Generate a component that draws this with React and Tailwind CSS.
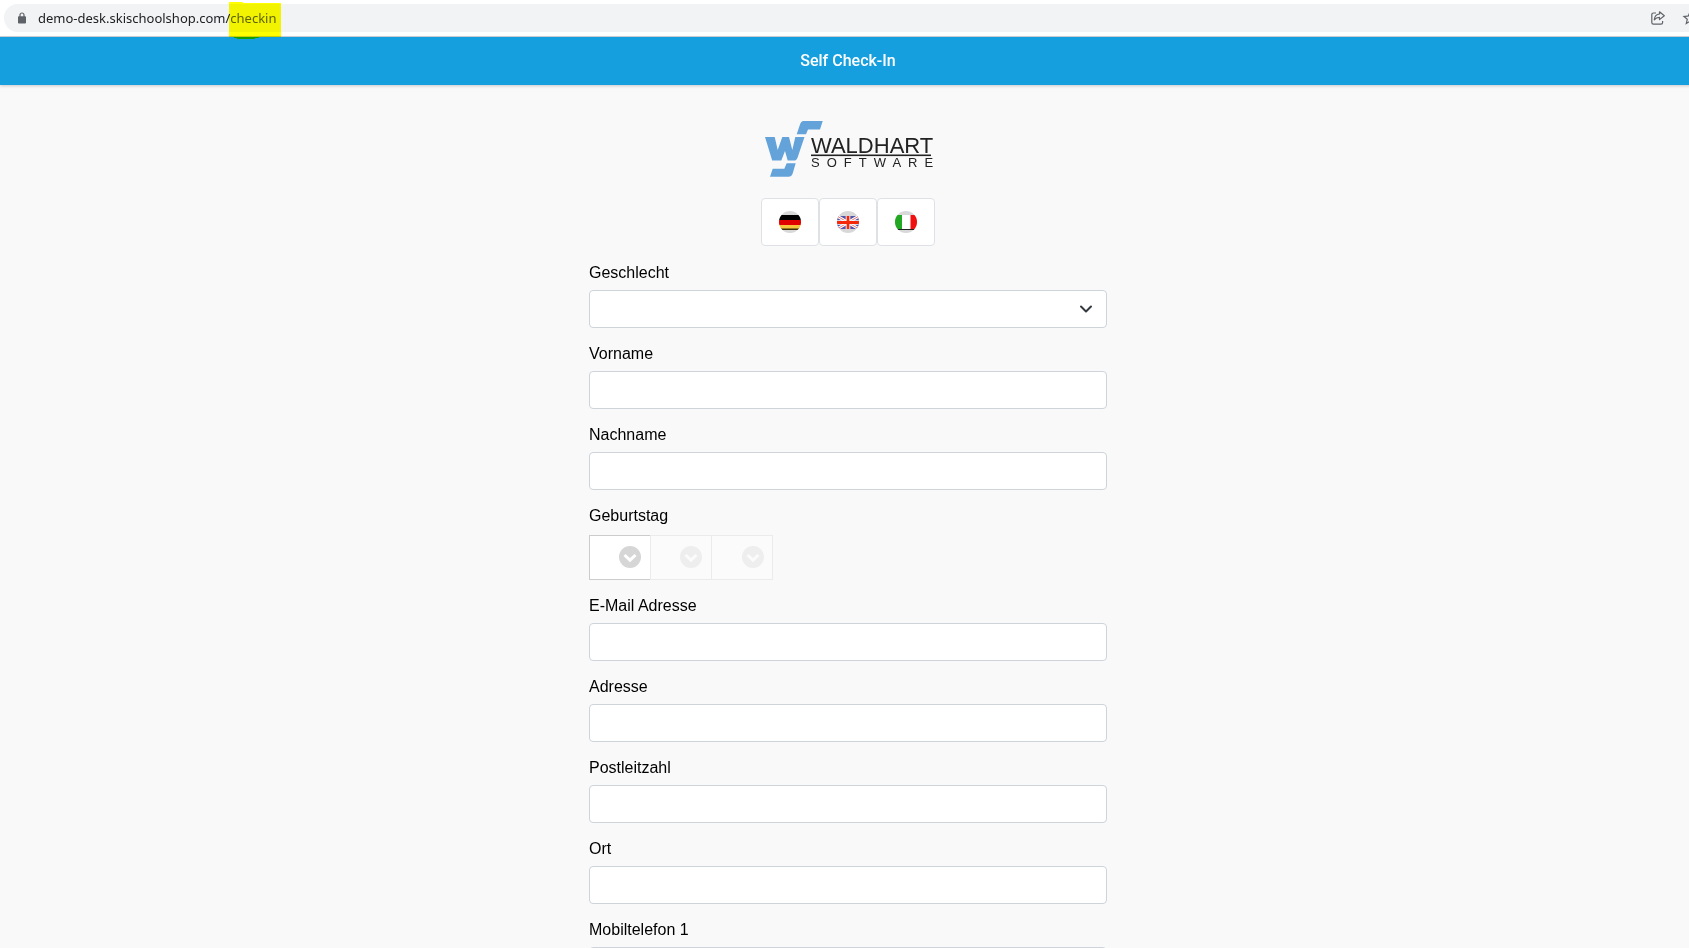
import { LuChevronDown } from 'react-icons/lu';
import { MdStarBorder } from 'react-icons/md';

const textFields = [
  { id: 'email', label: 'E-Mail Adresse', type: 'email' },
  { id: 'street', label: 'Adresse', type: 'text' },
  { id: 'zip', label: 'Postleitzahl', type: 'text' },
  { id: 'city', label: 'Ort', type: 'text' },
  { id: 'mobile', label: 'Mobiltelefon 1', type: 'tel' }
];

const LockIcon = () => (
  <svg viewBox="0 0 8 12" className="h-3 w-2 shrink-0" aria-hidden="true">
    <path d="M2 5V3a2 2 0 0 1 4 0v2" fill="none" stroke="#5f6368" strokeWidth="1.2" />
    <rect x="0" y="4.2" width="8" height="7.3" rx="0.9" fill="#5f6368" />
  </svg>
);

const ShareIcon = () => (
  <svg viewBox="0 0 14 14" className="size-[14px]" fill="none" stroke="#5f6368" strokeWidth="1.2" strokeLinejoin="round" aria-hidden="true">
    <path d="M5 2H2.4A1.6 1.6 0 0 0 .8 3.6V11.6A1.6 1.6 0 0 0 2.4 13.2H10A1.6 1.6 0 0 0 11.6 11.6V10" />
    <path d="M8.5 .8L13.3 4.7L8.5 8.6V6.4C6.2 6.4 4.6 7 3.3 8.8C3.6 5.5 5.5 3.3 8.5 3Z" />
  </svg>
);

const AddressBar = () => (
  <div className="bg-white pt-1 pb-1 border-b border-[#d0d3d7] font-['Noto_Sans',sans-serif]">
    <div className="ml-1 h-7 flex items-center rounded-l-full bg-[#f1f3f4] pl-[14px]">
      <LockIcon />
      <div className="relative ml-3 text-[13px] leading-5 text-[#202124]">
        demo-desk.skischoolshop.com/<span className="text-[#5f6368]">checkin</span>
        {/* marker stroke */}
        <svg viewBox="0 0 52 37" className="absolute -right-1 -top-[6px] z-10 h-[37px] w-[52px] mix-blend-multiply" aria-hidden="true">
          <path d="M0 0H14V1H52V35H30V36H26V37H8V36H5V35H0Z" fill="#ff0" />
        </svg>
      </div>
      <div className="ml-auto flex items-center gap-4">
        <button type="button" aria-label="Share"><ShareIcon /></button>
        <button type="button" aria-label="Bookmark" className="-mr-[10px] text-[#5f6368]">
          <MdStarBorder size={18} />
        </button>
      </div>
    </div>
  </div>
);

const Logo = () => (
  <svg viewBox="0 0 168 58" className="h-[58px] w-[168px] overflow-visible" role="img" aria-label="Waldhart Software">
    <g fill="#64a3da">
      <path d="M39.5 1H58.7L56 9.5H44L42 14.3H32.7L36 4.5Q37 1 39.5 1Z" />
      <path d="M1 17H10.7L13.7 30L18.3 17H25L28.3 30L31.3 17H40.5L34.7 34.3Q33 40.5 31 40.5H23.7L21 31L17.3 40.5H8.2Z" />
      <path d="M22.7 43.3H31.7L28.5 54Q27.5 56.7 25 56.7H6L8.7 48.7H20.3Z" />
    </g>
    <rect x="47" y="34.5" width="120" height="1.6" fill="#222" />
    <g fill="#222" className="font-['Liberation_Sans',sans-serif]">
      <text x="47" y="32.5" className="text-[22px]">WALDHART</text>
      <text x="47" y="47" className="text-[13px] tracking-[7px]">SOFTWARE</text>
    </g>
  </svg>
);

const FlagGerman = () => (
  <>
    <rect y="4" width="22" height="5" fill="#000" />
    <rect y="9" width="22" height="5" fill="#e00000" />
    <rect y="14" width="22" height="4" fill="#f5c53c" />
    <rect y="17.5" width="22" height="1.5" fill="#3d2f08" />
  </>
);

const FlagBritish = () => (
  <>
    <rect y="5" width="22" height="13" fill="#5553a8" />
    <path d="M0 5L22 18M22 5L0 18" stroke="#fff" strokeWidth="3" />
    <path d="M0 5L22 18M22 5L0 18" stroke="#e8786e" strokeWidth="1" />
    <path d="M11 5V18M0 11.5H22" stroke="#fff" strokeWidth="4.6" />
    <path d="M11 5V18M0 11.5H22" stroke="#f5280a" strokeWidth="2.8" />
  </>
);

const FlagItalian = () => (
  <>
    <rect y="4" width="7" height="15" fill="#22a822" />
    <rect x="7" y="4" width="9" height="15" fill="#fff" />
    <rect x="15.5" y="4" width="6.5" height="15" fill="#f01010" />
    <rect y="18" width="22" height="1" fill="#222" />
  </>
);

const languages = [
  { code: 'de', label: 'Deutsch', Flag: FlagGerman },
  { code: 'en', label: 'English', Flag: FlagBritish },
  { code: 'it', label: 'Italiano', Flag: FlagItalian }
];

const LanguageButton = ({ code, label, Flag }) => (
  <button
    type="button"
    aria-label={label}
    className="flex h-12 w-[58px] items-center justify-center rounded-[4px] border border-[#dee2e6] bg-white"
  >
    <svg viewBox="0 0 22 22" className="size-[22px]" aria-hidden="true">
      <clipPath id={`flag-${code}`}>
        <circle cx="11" cy="11" r="11" />
      </clipPath>
      <g clipPath={`url(#flag-${code})`}>
        <rect width="22" height="22" fill="#d8d8d8" />
        <Flag />
      </g>
    </svg>
  </button>
);

const TextField = ({ id, label, type = 'text' }) => (
  <div>
    <label htmlFor={id} className="block">{label}</label>
    <input id={id} type={type} className="mt-[5px] block h-[38px] w-full rounded-[4px] border border-[#ced4da] bg-white px-3" />
  </div>
);

const CircleChevron = ({ disabled }) => (
  <svg
    viewBox="0 0 22 22"
    className="pointer-events-none absolute right-[9px] top-[11px] size-[22px]"
    aria-hidden="true"
  >
    <circle cx="11" cy="11" r="11" fill={disabled ? '#eeeeee' : '#d6d6d6'} />
    <path d="M5.5 9L11 14.2L16.5 9" fill="none" stroke={disabled ? '#fbfbfb' : '#fff'} strokeWidth="3" />
  </svg>
);

const BirthdayFields = () => (
  <fieldset>
    <legend className="block">Geburtstag</legend>
    <div className="mt-[7px] flex">
      <div className="relative">
        <select aria-label="Tag" className="block h-[45px] w-[61px] appearance-none border border-r-0 border-[#cccccc] bg-white" />
        <CircleChevron />
      </div>
      <div className="relative">
        <select aria-label="Monat" disabled className="block h-[45px] w-[61px] appearance-none border border-r-0 border-[#ebebeb] bg-[#fbfbfb]" />
        <CircleChevron disabled />
      </div>
      <div className="relative">
        <select aria-label="Jahr" disabled className="block h-[45px] w-[62px] appearance-none border border-[#ebebeb] bg-[#fbfbfb]" />
        <CircleChevron disabled />
      </div>
    </div>
  </fieldset>
);

export default function App() {
  return (
    <div className="flex h-screen flex-col overflow-hidden bg-[#f9f9f9]">
      <AddressBar />

      {/* page content runs under the right window edge */}
      <div className="-mr-[7px] font-['Liberation_Sans',Arial,sans-serif] text-base text-black">
        <header className="flex h-12 items-center justify-center bg-[#169fde] shadow-[0_1px_3px_rgba(0,0,0,0.2)]">
          <h1 className="font-['Roboto',sans-serif] font-medium text-white">Self Check-In</h1>
        </header>

        <main className="mx-auto w-full max-w-[518px] pt-[35px]">
          <div className="flex justify-center">
            <Logo />
          </div>

          <div className="mt-5 flex justify-center">
            {languages.map((language) => (
              <LanguageButton key={language.code} {...language} />
            ))}
          </div>

          <form className="mt-[15px] flex flex-col gap-[14px]">
            <div>
              <label htmlFor="gender" className="block">Geschlecht</label>
              <div className="relative mt-[5px]">
                <select id="gender" className="block h-[38px] w-full appearance-none rounded-[4px] border border-[#ced4da] bg-white px-3" />
                <LuChevronDown className="pointer-events-none absolute right-[11px] top-[9px] size-5 text-[#343a40]" strokeWidth={2.4} />
              </div>
            </div>
            <TextField id="firstname" label="Vorname" />
            <TextField id="lastname" label="Nachname" />
            <BirthdayFields />
            {textFields.map((field) => (
              <TextField key={field.id} {...field} />
            ))}
          </form>
        </main>
      </div>
    </div>
  );
}
